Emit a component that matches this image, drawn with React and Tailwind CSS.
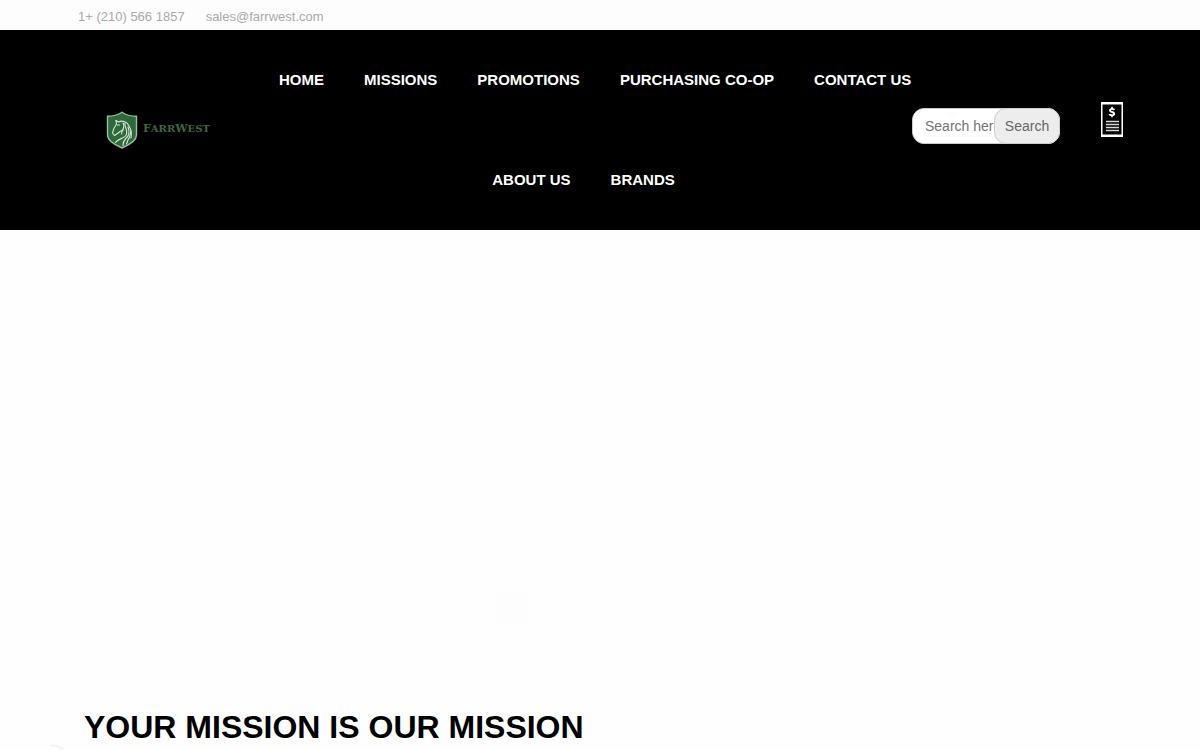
import React from "react";

const primaryLinks = ["HOME", "MISSIONS", "PROMOTIONS", "PURCHASING CO-OP", "CONTACT US"];
const secondaryLinks = ["ABOUT US", "BRANDS"];

function Logo() {
  return (
    <a href="#home" aria-label="FarrWest" className="block">
      <svg width="106" height="38" viewBox="0 0 106 38" fill="none">
        <path
          d="M16 1.200C12 4 6 5.200 1.500 5.200V24C1.500 30 9 34 16 37C23 34 30.500 30 30.500 24V5.200C26 5.200 20 4 16 1.200Z"
          fill="#2d6a3a"
          stroke="#9fbca3"
          strokeWidth="1.400"
        />
        <g stroke="#d9e7da" strokeWidth="1.100" strokeLinecap="round" strokeLinejoin="round">
          <path d="M10 9.500L12.500 11C16 9 21 10.500 23 15C25 19 26 21 25 27" />
          <path d="M10 9.500L10.500 13C8.500 16 7 19 6.500 22L8.500 24.500L11.500 22.500L14 20.500L17 19" />
          <path d="M17 12C20 15 15.500 20 15.500 23" />
          <path d="M19 12C18 16 22 18 20.500 23C19.500 28 12 27 9.500 31.500" />
          <path d="M22 16C24 21 23 25 19.500 28C17.500 30 17 32 17 34.500" />
          <path d="M25 20C24 24 24 26 22 29L20.500 33" />
          <path d="M11.500 14H13.500" />
        </g>
        <text x="37" y="21" fill="#3a6842" fontFamily="'DejaVu Serif', serif" fontWeight="700" fontSize="11">
          F<tspan fontSize="10">ARR</tspan>W<tspan fontSize="10">EST</tspan>
        </text>
      </svg>
    </a>
  );
}

function NavRow({ items, className }) {
  return (
    <ul className={`flex h-[100px] items-center justify-center gap-10 ${className}`}>
      {items.map((item) => (
        <li key={item}>
          <a href="#nav" className="whitespace-nowrap text-[15px] leading-5 font-bold text-white">
            {item}
          </a>
        </li>
      ))}
    </ul>
  );
}

function SearchForm() {
  return (
    <form className="flex h-9 w-[148px] rounded-xl border border-[#ccc] bg-white" onSubmit={(e) => e.preventDefault()}>
      <input
        type="text"
        aria-label="Search"
        placeholder="Search here..."
        className="min-w-0 flex-1 rounded-l-xl bg-white pl-3 text-sm text-[#555] outline-none placeholder:text-[#757575]"
      />
      <button type="submit" className="-my-px -mr-px w-[66px] rounded-xl border border-[#ccc] bg-[#ededed] text-sm text-[#666]">
        Search
      </button>
    </form>
  );
}

function QuoteIcon() {
  return (
    <svg width="22" height="35" viewBox="0 0 22 35" fill="none">
      <path d="M0 0H22V35H0ZM1.500 2.500V32.500H20.500V2.500Z" fill="#fff" fillRule="evenodd" />
      <path
        d="M13.300 8C12.800 6.600 9 6.400 9 8.400C9 10.400 13.200 9.600 13.200 11.700C13.200 13.800 9 13.600 8.500 12"
        stroke="#fff"
        strokeWidth="1.900"
      />
      <path d="M11 4.800V7M11 13V15.200" stroke="#fff" strokeWidth="1.600" />
      <path d="M5 19.500H18M5 22.500H18M5 25.500H18M5 28.500H18" stroke="#d8d8d8" strokeWidth="1.500" />
    </svg>
  );
}

export default function App() {
  return (
    <div className="relative min-h-screen overflow-hidden bg-[#fefefe] font-['Liberation_Sans',Arial,sans-serif]">
      <div className="flex h-[30px] items-center gap-[21px] bg-[#fdfdfd] px-[78px] pt-1 text-[13px] text-[#aaa]">
        <a href="tel:+12105661857">1+ (210) 566 1857</a>
        <a href="mailto:sales@farrwest.com">sales@farrwest.com</a>
      </div>
      <header className="flex items-center bg-black pr-[77px] pl-[106px]">
        <Logo />
        <nav className="flex-1 pl-[67px]">
          <NavRow items={primaryLinks} className="justify-start" />
          <NavRow items={secondaryLinks} className="pr-6" />
        </nav>
        <div className="flex items-start gap-[41px] pb-3.5">
          <div className="pt-1.5">
            <SearchForm />
          </div>
          <a href="#quote" aria-label="Request a quote">
            <QuoteIcon />
          </a>
        </div>
      </header>
      <main>
        <section aria-label="Featured" className="flex h-[478px] justify-center pt-[362px] pr-44">
          <div className="size-8 bg-[#fdfdfd]" />
        </section>
        <h1 className="px-[84px] text-[32px] leading-[38px] font-bold text-black">YOUR MISSION IS OUR MISSION</h1>
      </main>
      <svg className="absolute top-[744px] left-[48px]" width="18" height="6" viewBox="0 0 18 6" fill="none" aria-hidden="true">
        <path d="M2 1.500Q11 1 16 6" stroke="#f4f4f4" strokeWidth="2" />
      </svg>
    </div>
  );
}
